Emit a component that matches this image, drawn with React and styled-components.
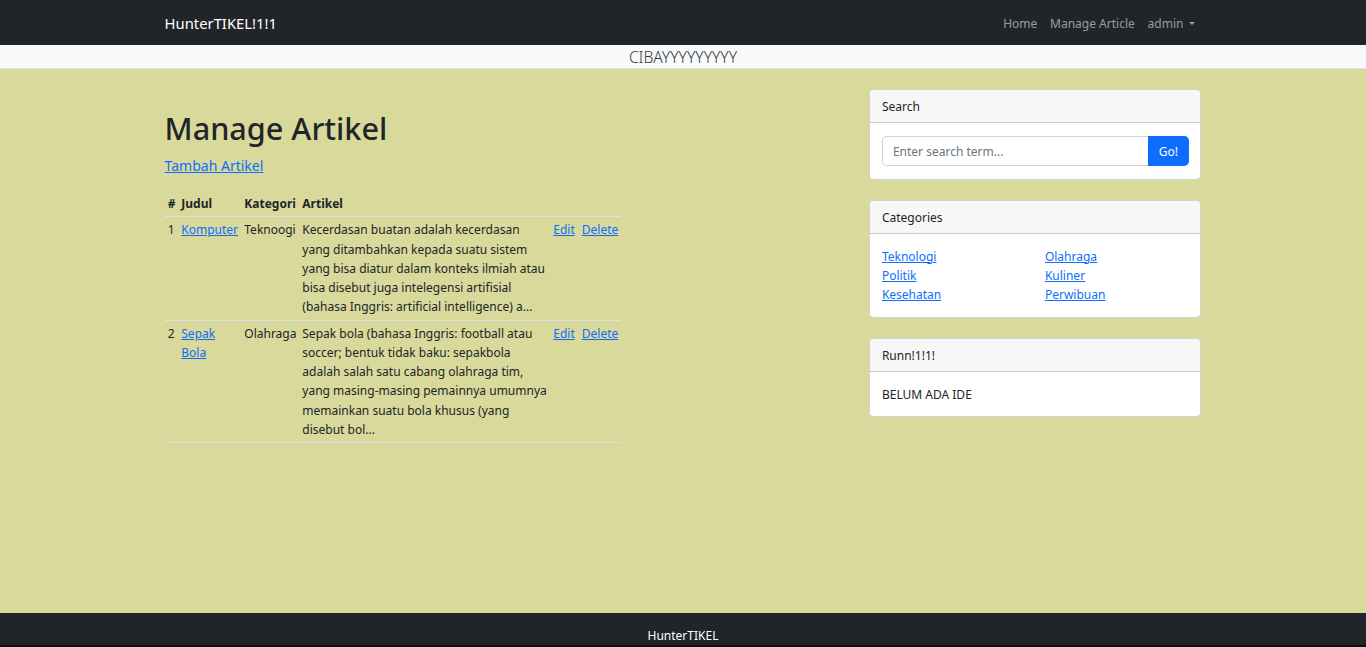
import styled, { createGlobalStyle } from "styled-components";

const GlobalStyle = createGlobalStyle`
  * {
    box-sizing: border-box;
  }
  body {
    margin: 0;
    font-family: "Noto Sans", "Open Sans", sans-serif;
    font-size: 12px;
    line-height: 19.2px;
    color: #212529;
    background: #d8d99b;
  }
`;

const articles = [
  {
    id: 1,
    judul: "Komputer",
    kategori: "Teknoogi",
    isi: "Kecerdasan buatan adalah kecerdasan yang ditambahkan kepada suatu sistem yang bisa diatur dalam konteks ilmiah atau bisa disebut juga intelegensi artifisial (bahasa Inggris: artificial intelligence) a...",
  },
  {
    id: 2,
    judul: "Sepak Bola",
    kategori: "Olahraga",
    isi: "Sepak bola (bahasa Inggris: football atau soccer; bentuk tidak baku: sepakbola adalah salah satu cabang olahraga tim, yang masing-masing pemainnya umumnya memainkan suatu bola khusus (yang disebut bol...",
  },
];

const categories = [
  "Teknologi",
  "Olahraga",
  "Politik",
  "Kuliner",
  "Kesehatan",
  "Perwibuan",
];

const App = () => {
  return (
    <>
      <GlobalStyle />
      <Navbar>
        <Container>
          <Brand href="#">HunterTIKEL!1!1</Brand>
          <NavList>
            <NavLink href="#">Home</NavLink>
            <NavLink href="#">Manage Article</NavLink>
            <NavLink href="#">
              admin <Caret />
            </NavLink>
          </NavList>
        </Container>
      </Navbar>
      <Banner>CIBAYYYYYYYYY</Banner>
      <Main>
        <Container>
          <Row>
            <LeftCol>
              <Title>Manage Artikel</Title>
              <AddLink href="#">Tambah Artikel</AddLink>
              <Table>
                <colgroup>
                  <col style={{ width: "13.5px" }} />
                  <col style={{ width: "63px" }} />
                  <col style={{ width: "58px" }} />
                  <col style={{ width: "251px" }} />
                  <col style={{ width: "71px" }} />
                </colgroup>
                <thead>
                  <tr>
                    <Th>#</Th>
                    <Th>Judul</Th>
                    <Th>Kategori</Th>
                    <Th>Artikel</Th>
                    <Th></Th>
                  </tr>
                </thead>
                <tbody>
                  {articles.map((a) => (
                    <tr key={a.id}>
                      <Td>{a.id}</Td>
                      <Td>
                        <Link href="#">{a.judul}</Link>
                      </Td>
                      <Td>{a.kategori}</Td>
                      <Td>{a.isi}</Td>
                      <Td>
                        <Actions>
                          <Link href="#">Edit</Link>
                          <Link href="#">Delete</Link>
                        </Actions>
                      </Td>
                    </tr>
                  ))}
                </tbody>
              </Table>
            </LeftCol>
            <Sidebar>
              <Card>
                <CardHeader>Search</CardHeader>
                <CardBody>
                  <InputGroup>
                    <SearchInput type="text" placeholder="Enter search term..." />
                    <GoButton type="button">Go!</GoButton>
                  </InputGroup>
                </CardBody>
              </Card>
              <Card>
                <CardHeader>Categories</CardHeader>
                <CardBody>
                  <CategoryGrid>
                    {categories.map((c) => (
                      <Link key={c} href="#">
                        {c}
                      </Link>
                    ))}
                  </CategoryGrid>
                </CardBody>
              </Card>
              <Card>
                <CardHeader>Runn!1!1!</CardHeader>
                <CardBody>BELUM ADA IDE</CardBody>
              </Card>
            </Sidebar>
          </Row>
        </Container>
      </Main>
      <Footer>HunterTIKEL</Footer>
    </>
  );
};

const Container = styled.div`
  width: 1056px;
  margin: 0 auto;
  padding: 0 9.6px;
`;

const Navbar = styled.nav`
  background: #212529;
  height: 45px;
  display: flex;
  align-items: center;

  ${Container} {
    display: flex;
    align-items: center;
    justify-content: space-between;
  }
`;

const Brand = styled.a`
  color: #fff;
  font-size: 14.8px;
  text-decoration: none;
  line-height: 24px;
  margin-top: 1px;
`;

const NavList = styled.div`
  display: flex;
  align-items: center;
  margin-top: 2px;
`;

const NavLink = styled.a`
  color: rgba(255, 255, 255, 0.55);
  text-decoration: none;
  padding: 0 6.4px;
  display: flex;
  align-items: center;
  gap: 4px;

  &:last-child {
    padding-right: 6px;
  }
`;

const Caret = styled.span`
  display: inline-block;
  margin-left: 2px;
  border-top: 3.5px solid rgba(255, 255, 255, 0.55);
  border-left: 3.5px solid transparent;
  border-right: 3.5px solid transparent;
`;

const Banner = styled.div`
  background: #f8f9fa;
  height: 24px;
  border-bottom: 1px solid #dee2e6;
  text-align: center;
  line-height: 24px;
  font-size: 15.6px;
  font-weight: 300;
  color: #343a40;
`;

const Main = styled.main`
  min-height: 544px;
  padding-top: 20px;
`;

const Row = styled.div`
  display: grid;
  grid-template-columns: 1fr 332px;
  column-gap: 40px;
`;

const LeftCol = styled.div`
  padding-top: 21px;
`;

const Title = styled.h1`
  margin: 0 0 8px;
  font-size: 30.6px;
  font-weight: 500;
  line-height: 1.2;
`;

const Link = styled.a`
  color: #0d6efd;
  text-decoration: underline;
`;

const AddLink = styled(Link)`
  display: inline-block;
  font-size: 14px;
  line-height: 22px;
`;

const Table = styled.table`
  margin-top: 14px;
  width: 456px;
  table-layout: fixed;
  border-collapse: collapse;
`;

const Th = styled.th`
  text-align: left;
  padding: 3.2px;
  font-weight: 700;
  border-bottom: 1px solid #dee2e6;
  white-space: nowrap;
`;

const Td = styled.td`
  vertical-align: top;
  padding: 3.2px;
  border-bottom: 1px solid #dee2e6;
`;

const Actions = styled.div`
  display: flex;
  gap: 7px;
`;

const Sidebar = styled.aside`
  display: flex;
  flex-direction: column;
  gap: 20px;
`;

const Card = styled.div`
  background: #fff;
  border: 1px solid rgba(0, 0, 0, 0.175);
  border-radius: 4.8px;
  overflow: hidden;
`;

const CardHeader = styled.div`
  background: #f7f7f7;
  border-bottom: 1px solid rgba(0, 0, 0, 0.175);
  padding: 7px 11.5px 5.8px;
  line-height: 19px;
`;

const CardBody = styled.div`
  padding: 13.2px 11.5px 12.4px;
`;

const InputGroup = styled.div`
  display: flex;
  height: 30.4px;
`;

const SearchInput = styled.input`
  flex: 1;
  min-width: 0;
  border: 1px solid #ced4da;
  border-right: none;
  border-radius: 4.8px 0 0 4.8px;
  padding: 0 10px;
  font: inherit;
  color: #212529;
  outline: none;

  &::placeholder {
    color: #6c757d;
  }
`;

const GoButton = styled.button`
  background: #0d6efd;
  color: #fff;
  border: none;
  border-radius: 0 4.8px 4.8px 0;
  padding: 0 10px;
  width: 41px;
  font: inherit;
`;

const CategoryGrid = styled.div`
  display: grid;
  grid-template-columns: 1fr 1fr;
  column-gap: 19px;
  line-height: 19.2px;
  justify-items: start;
`;

const Footer = styled.footer`
  background: #212529;
  height: 34px;
  color: #fff;
  text-align: center;
  padding-top: 13px;
  line-height: 19px;
  border-bottom: 2px solid #0d0f11;
`;

export default App;
